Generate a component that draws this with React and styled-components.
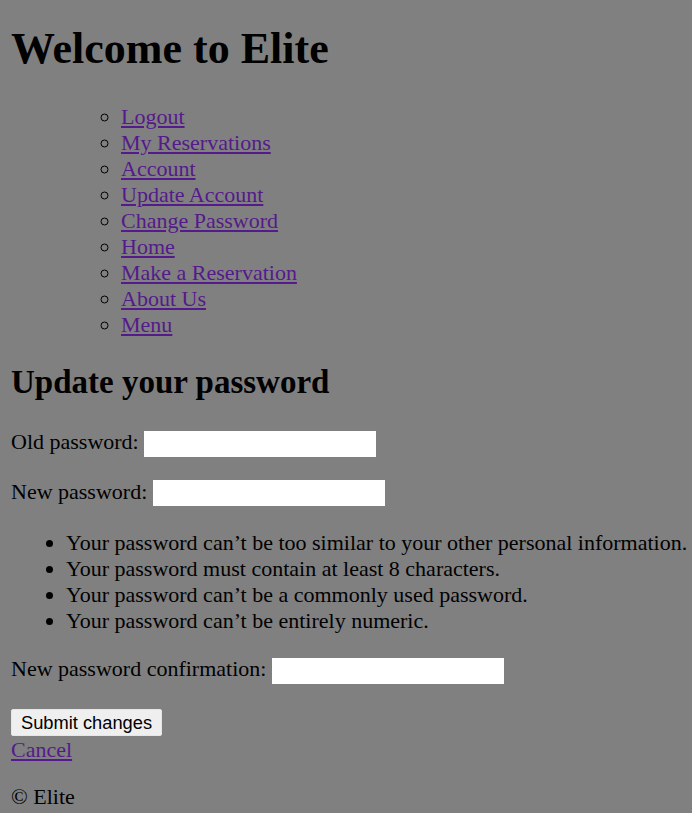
import styled, { createGlobalStyle } from 'styled-components'

const GlobalStyle = createGlobalStyle`
  html, body {
    margin: 0;
    padding: 0;
    background: #808080;
  }
  body {
    font-family: "Liberation Serif", "Times New Roman", serif;
    font-size: 22px;
    line-height: 26px;
    color: #000;
  }
`

const Page = styled.div`
  padding: 23px 11px 4px;
`

const Title = styled.h1`
  margin: 0;
  font-size: 44px;
  line-height: 51px;
  font-weight: bold;
`

const NavList = styled.ul`
  margin: 30px 0 0;
  padding-left: 110px;
  list-style: circle;
`

const NavLink = styled.a`
  color: #551a8b;
  text-decoration: underline;
`

const SectionTitle = styled.h2`
  margin: 25px 0 0;
  font-size: 33px;
  line-height: 38px;
  font-weight: bold;
`

const FieldRow = styled.div`
  display: flex;
  align-items: flex-start;
  gap: 5.5px;
  margin-top: ${p => p.$top || 22}px;
`

const Label = styled.label`
  white-space: nowrap;
`

const PasswordInput = styled.input`
  box-sizing: border-box;
  width: 232px;
  height: 26px;
  margin: 1.5px 0 0;
  border: 0;
  background: #fff;
  outline: none;
`

const HelpList = styled.ul`
  margin: 24px 0 0;
  padding-left: 55px;
  list-style: disc;

  li {
    white-space: nowrap;
  }
`

const SubmitButton = styled.button`
  display: block;
  box-sizing: border-box;
  margin-top: 25px;
  height: 27px;
  padding: 0 9px;
  border: 1px solid #e6e6e6;
  border-radius: 2px;
  background: #efefef;
  color: #000;
  font-family: "Liberation Sans", Arial, sans-serif;
  font-size: 18.3px;
  line-height: 25px;
`

const CancelLink = styled(NavLink)`
  display: inline-block;
  margin-top: 1px;
`

const Footer = styled.p`
  margin: 21px 0 0;
`

const navItems = [
  'Logout',
  'My Reservations',
  'Account',
  'Update Account',
  'Change Password',
  'Home',
  'Make a Reservation',
  'About Us',
  'Menu'
]

const rules = [
  'Your password can’t be too similar to your other personal information.',
  'Your password must contain at least 8 characters.',
  'Your password can’t be a commonly used password.',
  'Your password can’t be entirely numeric.'
]

const App = () => {
  return (
    <Page>
      <GlobalStyle />
      <Title>Welcome to Elite</Title>
      <NavList>
        {navItems.map(item => (
          <li key={item}>
            <NavLink href="#">{item}</NavLink>
          </li>
        ))}
      </NavList>

      <SectionTitle>Update your password</SectionTitle>
      <form onSubmit={e => e.preventDefault()}>
        <FieldRow $top={28}>
          <Label htmlFor="old">Old password:</Label>
          <PasswordInput id="old" type="password" />
        </FieldRow>
        <FieldRow>
          <Label htmlFor="new1">New password:</Label>
          <PasswordInput id="new1" type="password" />
        </FieldRow>
        <HelpList>
          {rules.map(rule => (
            <li key={rule}>{rule}</li>
          ))}
        </HelpList>
        <FieldRow>
          <Label htmlFor="new2">New password confirmation:</Label>
          <PasswordInput id="new2" type="password" />
        </FieldRow>
        <SubmitButton type="submit">Submit changes</SubmitButton>
        <CancelLink href="#">Cancel</CancelLink>
      </form>
      <Footer>© Elite</Footer>
    </Page>
  )
}

export default App
